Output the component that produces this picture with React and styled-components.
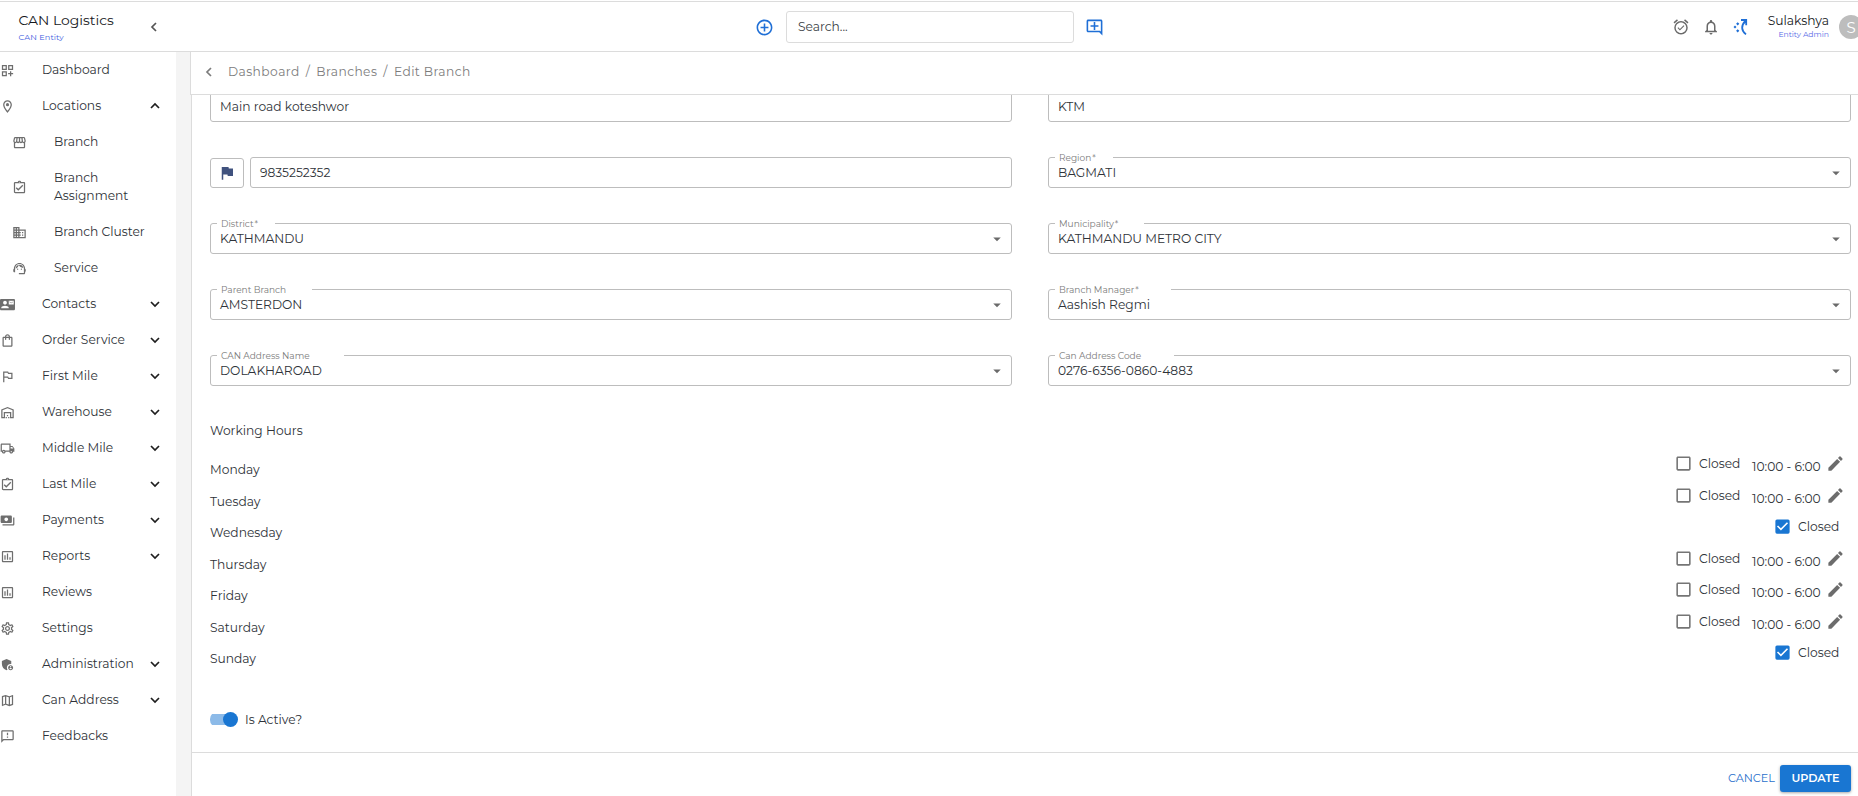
import React from "react";
import styled, { createGlobalStyle, css } from "styled-components";
import {
  MdOutlineDashboardCustomize, MdOutlineLocationOn, MdOutlineStorefront, MdOutlineAssignmentTurnedIn,
  MdOutlineBusiness, MdOutlineSupportAgent, MdContactMail, MdOutlineShoppingBag, MdOutlinedFlag,
  MdOutlineWarehouse, MdOutlineLocalShipping, MdPayments, MdOutlineAssessment, MdOutlineSettings,
  MdAdminPanelSettings, MdOutlineMap, MdOutlineFeedback, MdControlPoint, MdOutlineAddComment,
  MdOutlineAlarmOn, MdNotificationsNone, MdEdit, MdFlag,
  MdArrowDropDown, MdCheckBox, MdCheckBoxOutlineBlank,
} from "react-icons/md";

const GlobalStyle = createGlobalStyle`
  * { box-sizing: border-box; }
  body {
    margin: 0;
    overflow: hidden;
    background: #fff;
    color: #2e3238;
    font-family: Montserrat, Inter, "Liberation Sans", sans-serif;
    font-size: 12.25px;
    line-height: 18px;
  }
  svg { display: block; flex: none; }
`;

const Page = styled.div`
  width: 1858px;
  height: 796px;
  padding-top: 1px;
  overflow: hidden;
  display: flex;
  flex-direction: column;
`;

const TopBar = styled.header`
  height: 51px;
  padding-top: 1px;
  flex: none;
  display: flex;
  border-top: 1px solid #dcdcdc;
  border-bottom: 1px solid #dcdcdc;
`;
const Brand = styled.div`
  width: 191px;
  padding: 8px 0 0 18.5px;
  display: flex;
  justify-content: space-between;
`;
const BrandName = styled.div`
  font-size: 13.9px;
  line-height: 18px;
  color: #16181c;
  white-space: nowrap;
`;
const BrandRole = styled.div`
  font-size: 8.2px;
  line-height: 12px;
  color: #3d5be0;
  letter-spacing: 0.1px;
  padding-top: 2px;
`;
const Collapse = styled.div`
  padding: 11px 33px 0 0;
  color: #555;
`;
const SearchArea = styled.div`
  margin-left: 564px;
  display: flex;
  align-items: center;
  color: #1f6fd6;
`;
const SearchBox = styled.div`
  width: 288px;
  height: 32px;
  margin: 0 11px 0 12px;
  border: 1px solid #dcdcdc;
  border-radius: 3px;
  padding: 6px 11px;
  color: #3b3f45;
`;
const Tools = styled.div`
  margin-left: auto;
  display: flex;
  align-items: center;
`;
const ToolIcon = styled.span`
  width: 30px;
  display: flex;
  justify-content: center;
  color: ${(p) => (p.$blue ? "#1f6fd6" : "#6a6a6a")};
`;
const User = styled.div`
  width: 73px;
  text-align: right;
  margin: 0 10px 2px 0;
`;
const UserName = styled.div`
  font-size: 12.3px;
  line-height: 16px;
  color: #16181c;
`;
const UserRole = styled.div`
  font-size: 7.7px;
  line-height: 11px;
  color: #5668e6;
`;
const Avatar = styled.div`
  width: 24px;
  height: 24px;
  border-radius: 50%;
  background: #bdbdbd;
  color: #fff;
  font-size: 15px;
  line-height: 25px;
  text-align: center;
  margin-right: -5px;
`;

const Body = styled.div`
  flex: 1;
  min-height: 0;
  display: flex;
`;
const Sidebar = styled.nav`
  width: 176px;
  flex: none;
`;
const Gutter = styled.div`
  width: 15px;
  flex: none;
  background: #f4f4f4;
`;
const NavItem = styled.div`
  display: flex;
  align-items: center;
  color: #6e6e6e;
  padding: 9px 16px 9px ${(p) => (p.$child ? 12 : 0)}px;
`;
const NavIcon = styled.span`
  padding-top: 1px;
`;
const NavLabel = styled.span`
  flex: 1;
  margin-left: 27px;
  padding-right: 10px;
  color: #2e3238;
`;
const Arrow = styled.span`
  margin-left: -10px;
  color: #1e1e1e;
`;

const Main = styled.main`
  flex: 1;
  min-width: 0;
  display: flex;
  flex-direction: column;
`;
const Crumbs = styled.div`
  height: 43px;
  flex: none;
  display: flex;
  align-items: center;
  margin-left: -1px;
  padding: 0 0 2px 14px;
  border-left: 1px solid #dcdcdc;
  border-bottom: 1px solid #dcdcdc;
  background: #fff;
  color: #7c7c7c;
  letter-spacing: 0.43px;
`;
const CrumbTrail = styled.div`
  margin-left: 15px;
  display: flex;
  gap: 6px;
`;
const Form = styled.section`
  flex: 1;
  min-height: 0;
  overflow: hidden;
  padding: 0 7px 0 18px;
  border-left: 1px solid #dcdcdc;
  display: flex;
  flex-direction: column;
`;
const FieldGrid = styled.div`
  display: grid;
  grid-template-columns: 802px 803px;
  grid-auto-rows: 31px;
  column-gap: 36px;
  row-gap: 35px;
  margin-top: -4px;
`;
const Outline = styled.fieldset`
  flex: 1;
  min-width: 0;
  height: 31px;
  margin: 0;
  border: 1px solid #bdbdbd;
  border-radius: 3px;
  padding: 0 9px;
  position: relative;
  display: flex;
  align-items: center;
`;
const FieldLabel = styled.span`
  position: absolute;
  top: -7px;
  left: 6px;
  width: ${(p) => p.$gap}px;
  height: 10px;
  padding-left: 4px;
  background: #fff;
  font-size: 9px;
  line-height: 13px;
  color: #7b7b7b;
  white-space: nowrap;
`;
const Value = styled.span`
  flex: 1;
  position: relative;
`;
const Caret = styled.span`
  color: #6a6a6a;
  margin-right: -4px;
`;
const PhoneRow = styled.div`
  display: flex;
  gap: 6px;
`;
const FlagBox = styled.div`
  width: 34px;
  height: 30px;
  margin-top: 1px;
  border: 1px solid #bdbdbd;
  border-radius: 3px;
  display: flex;
  align-items: center;
  justify-content: center;
  color: #40527e;
`;
const SectionTitle = styled.h2`
  margin: 36px 0 14px;
  font-size: 12.25px;
  line-height: 18px;
  font-weight: 400;
`;
const DayRow = styled.div`
  height: 31.5px;
  flex: none;
  display: flex;
  justify-content: space-between;
`;
const DayName = styled.span`
  padding-top: 7px;
`;
const DayControls = styled.div`
  display: flex;
  align-items: flex-start;
  padding-right: ${(p) => (p.$closed ? 12 : 6)}px;
`;
const Check = styled.span`
  color: ${(p) => (p.$on ? "#1976d2" : "#757575")};
  margin-right: 6px;
`;
const ClosedText = styled.span`
  padding-top: 1px;
  width: 41px;
`;
const Hours = styled.span`
  padding-top: 4px;
  margin: 0 5px 0 12px;
  width: 69px;
  white-space: nowrap;
`;
const Pencil = styled.span`
  color: #6c6c6c;
`;
const ActiveRow = styled.div`
  margin-top: 36px;
  display: flex;
  align-items: center;
  gap: 7px;
`;
const Track = styled.span`
  width: 28px;
  height: 15px;
  display: flex;
  align-items: center;
  justify-content: flex-end;
  background: linear-gradient(#8cbae8, #8cbae8) 0 2px / 24px 11px no-repeat;
  border-radius: 7px 0 0 7px;
`;
const Thumb = styled.span`
  width: 15px;
  height: 15px;
  border-radius: 50%;
  background: #1976d2;
`;
const Footer = styled.footer`
  height: 44px;
  flex: none;
  border-top: 1px solid #dcdcdc;
  border-left: 1px solid #dcdcdc;
  display: flex;
  justify-content: flex-end;
  padding: 12px 7px 0 0;
`;
const Button = styled.button`
  font: inherit;
  font-size: 11.2px;
  height: 27px;
  padding: 0 0 2px;
  border: 0;
  background: none;
  color: #2a70cc;
  width: 52px;
  text-align: left;
  ${(p) =>
    p.$primary &&
    css`
      width: 71px;
      text-align: center;
      font-weight: 600;
      color: #fff;
      background: #1976d2;
      border-radius: 3px;
      box-shadow: 0 1px 3px rgba(0, 0, 0, 0.35);
    `}
`;

const nav = [
  ["Dashboard", MdOutlineDashboardCustomize],
  ["Locations", MdOutlineLocationOn, "up"],
  ["Branch", MdOutlineStorefront, null, true],
  ["Branch Assignment", MdOutlineAssignmentTurnedIn, null, true],
  ["Branch Cluster", MdOutlineBusiness, null, true],
  ["Service", MdOutlineSupportAgent, null, true],
  ["Contacts", MdContactMail, "down"],
  ["Order Service", MdOutlineShoppingBag, "down"],
  ["First Mile", MdOutlinedFlag, "down"],
  ["Warehouse", MdOutlineWarehouse, "down"],
  ["Middle Mile", MdOutlineLocalShipping, "down"],
  ["Last Mile", MdOutlineAssignmentTurnedIn, "down"],
  ["Payments", MdPayments, "down"],
  ["Reports", MdOutlineAssessment, "down"],
  ["Reviews", MdOutlineAssessment],
  ["Settings", MdOutlineSettings],
  ["Administration", MdAdminPanelSettings, "down"],
  ["Can Address", MdOutlineMap, "down"],
  ["Feedbacks", MdOutlineFeedback],
];

const days = [
  ["Monday", false], ["Tuesday", false], ["Wednesday", true], ["Thursday", false],
  ["Friday", false], ["Saturday", false], ["Sunday", true],
];

const Chevron = ({ up }) => (
  <svg width="10" height="8" viewBox="0 0 10 8" fill="none" stroke="currentColor" strokeWidth="1.7">
    <path d={up ? "M1 6l4-4 4 4" : "M1 2l4 4 4-4"} />
  </svg>
);

const Back = () => (
  <svg width="8" height="10" viewBox="0 0 8 10" fill="none" stroke="currentColor" strokeWidth="1.7">
    <path d="M6 1L2 5l4 4" />
  </svg>
);

const Select = ({ label, gap, value }) => (
  <Outline>
    <FieldLabel $gap={gap}>{label}</FieldLabel>
    <Value>{value}</Value>
    <Caret><MdArrowDropDown size={18} /></Caret>
  </Outline>
);

export default function App() {
  return (
    <Page>
      <GlobalStyle />
      <TopBar>
        <Brand>
          <div>
            <BrandName>CAN Logistics</BrandName>
            <BrandRole>CAN Entity</BrandRole>
          </div>
          <Collapse><Back /></Collapse>
        </Brand>
        <SearchArea>
          <MdControlPoint size={19} />
          <SearchBox>Search...</SearchBox>
          <MdOutlineAddComment size={19} />
        </SearchArea>
        <Tools>
          <ToolIcon><MdOutlineAlarmOn size={18} /></ToolIcon>
          <ToolIcon><MdNotificationsNone size={18} /></ToolIcon>
          <ToolIcon $blue>
            <svg width="16" height="18" viewBox="0 0 16 18" fill="none" stroke="currentColor" strokeWidth="1.8">
              <path d="M13 16.4C8.2 12.8 7.8 7.6 12.4 3M8 2h5.2v5.2" />
              <path d="M4.7 4.2l1.6 1.6-1.6 1.6-1.6-1.6zM2 7.6l1.5 1.5L2 10.6.5 9.1zM4.7 11.2l1.6 1.6-1.6 1.6-1.6-1.6z" fill="currentColor" stroke="none" />
            </svg>
          </ToolIcon>
          <User>
            <UserName>Sulakshya</UserName>
            <UserRole>Entity Admin</UserRole>
          </User>
          <Avatar>S</Avatar>
        </Tools>
      </TopBar>
      <Body>
        <Sidebar>
          {nav.map(([label, Icon, arrow, child]) => (
            <NavItem key={label} $child={child}>
              <NavIcon><Icon size={15} /></NavIcon>
              <NavLabel>{label}</NavLabel>
              {arrow && <Arrow><Chevron up={arrow === "up"} /></Arrow>}
            </NavItem>
          ))}
        </Sidebar>
        <Gutter />
        <Main>
          <Crumbs>
            <Back />
            <CrumbTrail>
              <span>Dashboard</span>
              <span>/</span>
              <span>Branches</span>
              <span>/</span>
              <span>Edit Branch</span>
            </CrumbTrail>
          </Crumbs>
          <Form>
            <FieldGrid>
              <Outline><Value>Main road koteshwor</Value></Outline>
              <Outline><Value>KTM</Value></Outline>
              <PhoneRow>
                <FlagBox><MdFlag size={18} /></FlagBox>
                <Outline><Value>9835252352</Value></Outline>
              </PhoneRow>
              <Select label="Region&#8202;*" gap={58} value="BAGMATI" />
              <Select label="District&#8202;*" gap={58} value="KATHMANDU" />
              <Select label="Municipality&#8202;*" gap={89} value="KATHMANDU METRO CITY" />
              <Select label="Parent Branch" gap={95} value="AMSTERDON" />
              <Select label="Branch Manager&#8202;*" gap={116} value="Aashish Regmi" />
              <Select label="CAN Address Name" gap={127} value="DOLAKHAROAD" />
              <Select label="Can Address Code" gap={119} value="0276-6356-0860-4883" />
            </FieldGrid>
            <SectionTitle>Working Hours</SectionTitle>
            {days.map(([day, closed]) => (
              <DayRow key={day}>
                <DayName>{day}</DayName>
                <DayControls $closed={closed}>
                  <Check $on={closed}>{closed ? <MdCheckBox size={19} /> : <MdCheckBoxOutlineBlank size={19} />}</Check>
                  <ClosedText>Closed</ClosedText>
                  {!closed && <Hours>10:00 - 6:00</Hours>}
                  {!closed && <Pencil><MdEdit size={19} /></Pencil>}
                </DayControls>
              </DayRow>
            ))}
            <ActiveRow>
              <Track><Thumb /></Track>
              <span>Is Active?</span>
            </ActiveRow>
          </Form>
          <Footer>
            <Button>CANCEL</Button>
            <Button $primary>UPDATE</Button>
          </Footer>
        </Main>
      </Body>
    </Page>
  );
}
